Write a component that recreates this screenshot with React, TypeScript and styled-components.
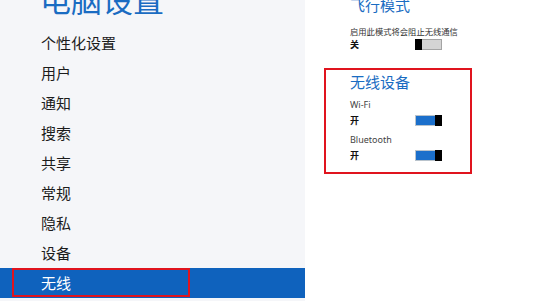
import React from "react";
import styled, { createGlobalStyle } from "styled-components";

const CJK = `"Noto Sans CJK SC", "Noto Sans", sans-serif`;
const BLUE = "#1a6cc2";

const GlobalStyle = createGlobalStyle`
  html, body {
    margin: 0;
    padding: 0;
    width: 540px;
    height: 301px;
    overflow: hidden;
    background: #ffffff;
    font-family: ${CJK};
  }
`;

const menuItems = ["个性化设置", "用户", "通知", "搜索", "共享", "常规", "隐私", "设备", "无线"];

const Page = styled.div`
  display: flex;
  width: 540px;
  height: 301px;
  overflow: hidden;
`;

const Sidebar = styled.nav`
  width: 305px;
  flex-shrink: 0;
  background: #f5f6f9;
  display: flex;
  flex-direction: column;
`;

const PageTitle = styled.h1`
  margin: -19px 0 0;
  padding-left: 40px;
  font-size: 31px;
  line-height: 36px;
  font-weight: 400;
  color: ${BLUE};
`;

const Menu = styled.ul`
  list-style: none;
  margin: 11px 0 0;
  padding: 0;
`;

const MenuItem = styled.li<{ $active?: boolean }>`
  position: relative;
  height: 30px;
  line-height: 30px;
  padding-left: 41px;
  font-size: 15px;
  color: ${(p) => (p.$active ? "#ffffff" : "#1c1c1c")};
  background: ${(p) => (p.$active ? "#0f62bd" : "transparent")};

  ${(p) =>
    p.$active &&
    `
    &::after {
      content: "";
      position: absolute;
      left: 12px;
      top: 0;
      width: 174px;
      height: 25px;
      border: 2px solid #e0141e;
    }
  `}
`;

const Content = styled.main`
  flex: 1;
  padding-left: 19px;
  display: flex;
  flex-direction: column;
`;

const Section = styled.section`
  padding-left: 26px;
`;

const SectionTitle = styled.h2<{ $offset?: number }>`
  margin: ${(p) => p.$offset ?? 0}px 0 0;
  font-size: 15px;
  line-height: 20px;
  font-weight: 400;
  color: ${BLUE};
`;

const Hint = styled.div<{ $gap?: number }>`
  margin-top: ${(p) => p.$gap ?? 0}px;
  font-size: 8.3px;
  line-height: 12px;
  color: #333333;
`;

const Label = styled.div<{ $gap?: number }>`
  margin-top: ${(p) => p.$gap ?? 0}px;
  font-family: "Noto Sans", ${CJK};
  font-size: 9px;
  line-height: 12px;
  color: #444444;
`;

const SwitchRow = styled.div<{ $gap?: number }>`
  display: flex;
  align-items: center;
  height: 12px;
  margin-top: ${(p) => p.$gap ?? 0}px;
`;

const State = styled.span`
  width: 65px;
  font-size: 9px;
  font-weight: 700;
  color: #111111;
`;

const Track = styled.span<{ $on: boolean }>`
  display: flex;
  flex-direction: ${(p) => (p.$on ? "row" : "row-reverse")};
  width: 27px;
  height: 11px;
  box-sizing: border-box;
  border: 1px solid ${(p) => (p.$on ? "#b9c3cc" : "#a4a4a4")};
  border-left: ${(p) => (p.$on ? "1px solid #b9c3cc" : "none")};
  border-right: ${(p) => (p.$on ? "none" : "1px solid #a4a4a4")};
  background: ${(p) => (p.$on ? "#1b6fcb" : "#d4d4d4")};
`;

const Fill = styled.span`
  flex: 1;
`;

const Thumb = styled.span`
  width: 7px;
  margin: -1px 0;
  background: #000000;
`;

const Toggle: React.FC<{ on: boolean }> = ({ on }) => (
  <Track $on={on}>
    <Fill />
    <Thumb />
  </Track>
);

const HighlightBox = styled.section`
  margin-top: 18px;
  width: 148px;
  box-sizing: border-box;
  border: 2px solid #e0141e;
  padding: 2px 0 11px 24px;
`;

export default function App() {
  return (
    <>
      <GlobalStyle />
      <Page>
        <Sidebar>
          <PageTitle>电脑设置</PageTitle>
          <Menu>
            {menuItems.map((item) => (
              <MenuItem key={item} $active={item === "无线"}>
                {item}
              </MenuItem>
            ))}
          </Menu>
        </Sidebar>
        <Content>
          <Section>
            <SectionTitle $offset={-5}>飞行模式</SectionTitle>
            <Hint $gap={10}>启用此模式将会阻止无线通信</Hint>
            <SwitchRow $gap={1}>
              <State>关</State>
              <Toggle on={false} />
            </SwitchRow>
          </Section>
          <HighlightBox>
            <SectionTitle>无线设备</SectionTitle>
            <Label $gap={7}>Wi-Fi</Label>
            <SwitchRow $gap={3}>
              <State>开</State>
              <Toggle on />
            </SwitchRow>
            <Label $gap={8}>Bluetooth</Label>
            <SwitchRow $gap={3}>
              <State>开</State>
              <Toggle on />
            </SwitchRow>
          </HighlightBox>
        </Content>
      </Page>
    </>
  );
}
